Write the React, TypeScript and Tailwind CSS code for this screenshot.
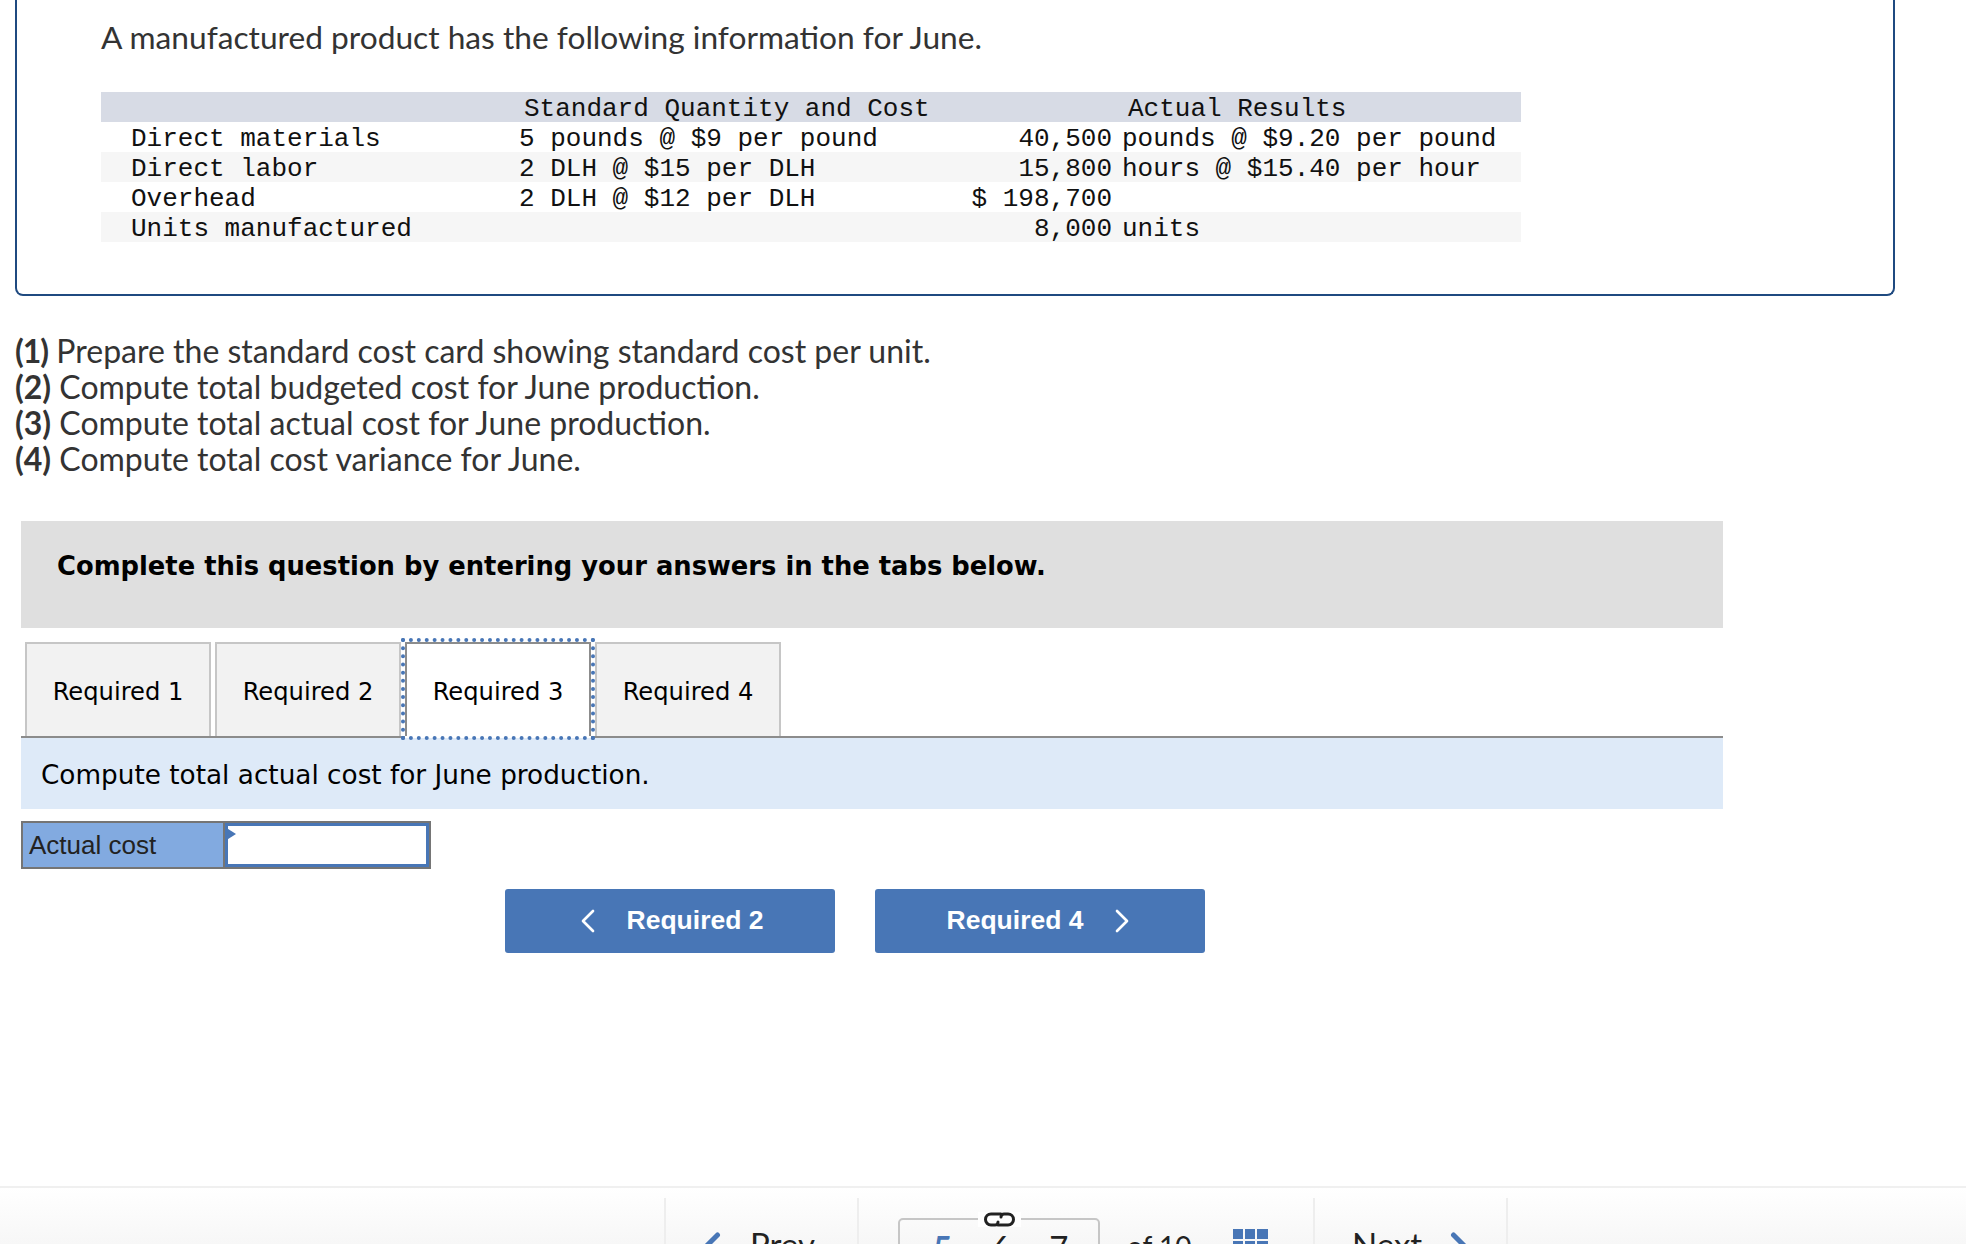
import React from 'react';
import { ChevronLeft, ChevronRight } from 'lucide-react';

const rows = [
  { label: 'Direct materials', standard: '5 pounds @ $9 per pound', amount: '40,500', unit: 'pounds @ $9.20 per pound', shaded: false },
  { label: 'Direct labor', standard: '2 DLH @ $15 per DLH', amount: '15,800', unit: 'hours @ $15.40 per hour', shaded: true },
  { label: 'Overhead', standard: '2 DLH @ $12 per DLH', amount: '$ 198,700', unit: '', shaded: false },
  { label: 'Units manufactured', standard: '', amount: '8,000', unit: 'units', shaded: true },
];

const tabs = ['Required 1', 'Required 2', 'Required 3', 'Required 4'];

const questions = [
  ['(1)', 'Prepare the standard cost card showing standard cost per unit.'],
  ['(2)', 'Compute total budgeted cost for June production.'],
  ['(3)', 'Compute total actual cost for June production.'],
  ['(4)', 'Compute total cost variance for June.'],
];

const gridCells = [0, 1, 2, 3, 4, 5];

export default function App() {
  return (
    <div className="h-[1244px] overflow-hidden bg-white font-['Lato',sans-serif] text-[#333]">
      {/* Question card, its top edge scrolled out of view */}
      <div className="ml-[15px] h-[296px] w-[1880px] rounded-b-[8px] border-x-2 border-b-2 border-[#1f4a80] pl-[84px] pt-[17px]">
        <p className="text-[31.7px] leading-[40px]">A manufactured product has the following information for June.</p>
        <div className="mt-[35px] w-[1420px] font-['Liberation_Mono',monospace] text-[26px] leading-[34px] text-[#111]">
          <div className="flex h-[30px] bg-[#d7dbe5]">
            <div className="w-[423px]" />
            <div className="w-[604px] whitespace-pre">Standard Quantity and Cost</div>
            <div className="whitespace-pre">Actual Results</div>
          </div>
          {rows.map((row) => (
            <div key={row.label} className={`flex h-[30px] whitespace-pre ${row.shaded ? 'bg-[#f6f6f6]' : ''}`}>
              <div className="w-[418px] pl-[30px]">{row.label}</div>
              <div className="w-[365px]">{row.standard}</div>
              <div className="w-[228px] text-right">{row.amount}</div>
              <div className="ml-[10px]">{row.unit}</div>
            </div>
          ))}
        </div>
      </div>

      <div className="ml-[15px] mt-[37px] text-[32px] leading-[36px]">
        {questions.map(([num, text]) => (
          <p key={num}><b className={num === '(1)' ? 'tracking-[-1px]' : ''}>{num}</b> {text}</p>
        ))}
      </div>

      <div className="ml-[21px] mt-[44px] w-[1702px] font-['DejaVu_Sans',sans-serif]">
        <div className="h-[107px] bg-[#dfdfdf] pl-[36px] pt-[28px] text-[25.8px] font-bold leading-[34px] text-black">
          Complete this question by entering your answers in the tabs below.
        </div>
        <div className="mt-[14px] flex h-[96px] gap-[4px] border-b-2 border-[#8c8c8c] pl-[4px] text-[24.2px] text-black">
          {tabs.map((tab) => (
            <div
              key={tab}
              className={tab === 'Required 3'
                ? 'relative z-10 flex h-[94px] w-[186px] items-center justify-center border-x-2 border-t-2 border-[#8c8c8c] bg-white pt-[4px] shadow-[0_2px_0_white] outline-[4px] outline-dotted outline-[#4876b6]'
                : 'flex h-[94px] w-[186px] items-center justify-center border-x-2 border-t-2 border-[#c6c6c6] bg-[#f2f2f2] pt-[4px]'}
            >
              {tab}
            </div>
          ))}
        </div>
        <div className="flex h-[71px] items-center bg-[#deeaf8] pl-[20px] pt-[4px] text-[26.3px] text-black">
          Compute total actual cost for June production.
        </div>
        <div className="mt-[12px] flex h-[48px] w-[410px] border-2 border-[#757575] font-['Liberation_Sans',sans-serif] text-[26px] text-[#222]">
          <div className="flex w-[202px] items-center border-r-2 border-[#757575] bg-[#82aae0] pl-[6px]">Actual cost</div>
          <div className="relative flex-1 border-[3px] border-[#4876b6] bg-white">
            <svg className="absolute left-[-3px] top-[1px]" width="11" height="14" viewBox="0 0 11 14">
              <polygon points="0,0 11,7 0,14" fill="#4876b6" />
            </svg>
          </div>
        </div>
      </div>

      <div className="ml-[505px] mt-[20px] flex gap-[40px] font-['Liberation_Sans',sans-serif] text-[26.5px] font-bold text-white">
        <div className="flex h-[64px] w-[330px] items-center justify-center gap-[19px] rounded-[3px] bg-[#4876b6] pr-[9px]">
          <ChevronLeft size={40} strokeWidth={1.6} />
          <span>Required 2</span>
        </div>
        <div className="flex h-[64px] w-[330px] items-center justify-center gap-[19px] rounded-[3px] bg-[#4876b6] pl-[9px]">
          <span>Required 4</span>
          <ChevronRight size={40} strokeWidth={1.6} />
        </div>
      </div>

      {/* Footer pager, cut off by the bottom of the window */}
      <div className="mt-[233px] flex h-[58px] overflow-hidden border-t-2 border-[#f0f0f0] bg-linear-to-b from-white to-[#f7f7f7] pl-[664px] pt-[10px] text-[33px] leading-[40px] text-[#222]">
        <div className="flex h-[80px] w-[195px] items-start gap-[10px] border-x-2 border-[#eeeeee] pl-[14px]">
          <ChevronLeft size={60} strokeWidth={2} className="mt-[22px] shrink-0 text-[#4876b6]" />
          <span className="mt-[26px]">Prev</span>
        </div>
        <div className="flex w-[454px] items-start">
          <div className="relative ml-[39px] mt-[20px] flex h-[60px] w-[202px] shrink-0 gap-[39px] rounded-[5px] border-2 border-[#c6c6c6] pl-[33px] pt-[7px]">
            <span className="absolute left-[78px] top-[-8px] bg-white px-[5px]">
              <svg width="33" height="15" viewBox="0 0 33 15" fill="none" stroke="#222" strokeWidth="3" strokeLinecap="round" className="block">
                <path d="M18 2 H8 a5.5 5.5 0 0 0 0 11 H12 a3 3 0 0 0 3-3" />
                <path d="M15 13 H25 a5.5 5.5 0 0 0 0-11 H21 a3 3 0 0 0-3 3" />
              </svg>
            </span>
            <span className="font-bold text-[#4876b6]">5</span>
            <span>6</span>
            <span>7</span>
          </div>
          <span className="ml-[27px] mt-[28px] whitespace-pre text-[28px]">of 10</span>
          <div className="ml-[41px] mt-[31px] grid w-[35px] shrink-0 grid-cols-3 gap-[2px]">
            {gridCells.map((cell) => (
              <div key={cell} className="h-[10px] bg-[#4876b6]" />
            ))}
          </div>
        </div>
        <div className="flex h-[80px] w-[195px] items-start gap-[9px] border-x-2 border-[#eeeeee] pl-[37px]">
          <span className="mt-[26px]">Next</span>
          <ChevronRight size={60} strokeWidth={2} className="mt-[22px] shrink-0 text-[#4876b6]" />
        </div>
      </div>
    </div>
  );
}
